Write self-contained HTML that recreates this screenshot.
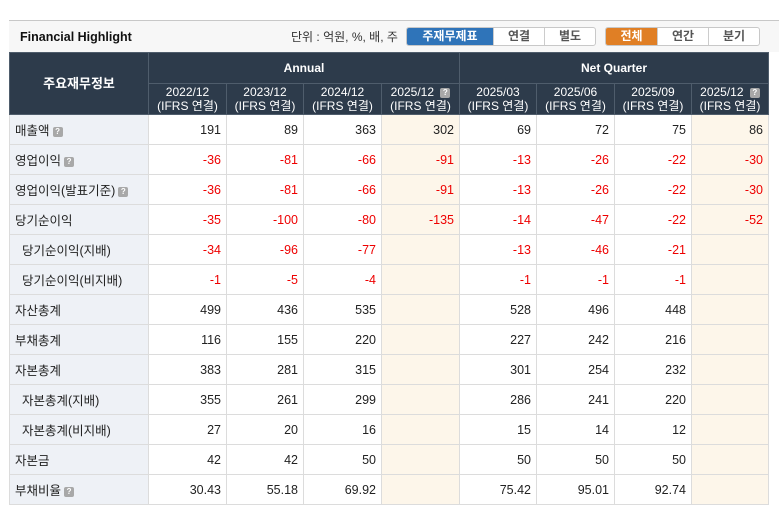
<!DOCTYPE html>
<html><head><meta charset="utf-8"><style>
*{margin:0;padding:0;box-sizing:border-box}
body{width:782px;height:492px;overflow:hidden;background:#fff;font-family:"Liberation Sans","Noto Sans CJK KR",sans-serif;font-size:12px;color:#222;position:relative}
.bar{position:absolute;left:9px;top:20px;width:770px;height:32px;background:#f7f7f7;border-top:1px solid #c8c8c8}
.title{position:absolute;left:11px;top:9px;font-weight:bold;font-size:12.5px;color:#111}
.unit{position:absolute;left:282px;top:7px;font-size:12px;color:#333}
.btns{position:absolute;top:6px;height:19px;display:flex;border:1px solid #c8c8c8;border-radius:3px;overflow:hidden;background:#fff}
.btns div{height:17px;line-height:17px;text-align:center;font-size:12px;color:#555;font-weight:bold;border-left:1px solid #ccc}
.btns div:first-child{border-left:none}
.blue{background:#2f74b9;color:#fff!important}
.orange{background:#e07f25;color:#fff!important}
table{position:absolute;left:9px;top:52px;border-collapse:collapse;table-layout:fixed}
th{background:#2d3b4b;color:#fff;font-size:12px;font-weight:bold;border:1px solid #4f5d6c;line-height:14px;padding:0}
th.y{font-weight:normal}
td{height:30px;border:1px solid #dcdcdc;text-align:right;padding-right:5px;font-size:12.5px}
td.l{text-align:left;background:#eef1f6;padding-left:5px}
td.i{padding-left:12px}
td.f{background:#fdf6ea}
.n{color:#e00}
.q{display:inline-block;width:10px;height:10px;background:#a8a8a8;border-radius:2px;vertical-align:middle;margin-left:3px;color:#fff;font-size:8px;line-height:10px;text-align:center;font-weight:bold}
</style></head><body>
<div class="bar">
<div class="title">Financial Highlight</div>
<div class="unit">단위 : 억원, %, 배, 주</div>
<div class="btns" style="left:397px"><div class="blue" style="width:86px">주재무제표</div><div style="width:51px">연결</div><div style="width:51px">별도</div></div>
<div class="btns" style="left:596px"><div class="orange" style="width:51px">전체</div><div style="width:51px">연간</div><div style="width:51px">분기</div></div>
</div>
<table>
<colgroup><col style="width:139px"><col style="width:78px"><col style="width:77px"><col style="width:78px"><col style="width:78px"><col style="width:77px"><col style="width:78px"><col style="width:77px"><col style="width:77px"></colgroup>
<tr style="height:31px"><th rowspan="2" style="font-size:13px">주요재무정보</th><th colspan="4">Annual</th><th colspan="4">Net Quarter</th></tr>
<tr style="height:31px"><th class="y">2022/12<br>(IFRS 연결)</th><th class="y">2023/12<br>(IFRS 연결)</th><th class="y">2024/12<br>(IFRS 연결)</th><th class="y">2025/12 <span class="q">?</span><br>(IFRS 연결)</th><th class="y">2025/03<br>(IFRS 연결)</th><th class="y">2025/06<br>(IFRS 연결)</th><th class="y">2025/09<br>(IFRS 연결)</th><th class="y">2025/12 <span class="q">?</span><br>(IFRS 연결)</th></tr>
<tr><td class="l">매출액<span class="q">?</span></td><td>191</td><td>89</td><td>363</td><td class="f">302</td><td>69</td><td>72</td><td>75</td><td class="f">86</td></tr>
<tr><td class="l">영업이익<span class="q">?</span></td><td class="n">-36</td><td class="n">-81</td><td class="n">-66</td><td class="f n">-91</td><td class="n">-13</td><td class="n">-26</td><td class="n">-22</td><td class="f n">-30</td></tr>
<tr><td class="l">영업이익(발표기준)<span class="q">?</span></td><td class="n">-36</td><td class="n">-81</td><td class="n">-66</td><td class="f n">-91</td><td class="n">-13</td><td class="n">-26</td><td class="n">-22</td><td class="f n">-30</td></tr>
<tr><td class="l">당기순이익</td><td class="n">-35</td><td class="n">-100</td><td class="n">-80</td><td class="f n">-135</td><td class="n">-14</td><td class="n">-47</td><td class="n">-22</td><td class="f n">-52</td></tr>
<tr><td class="l i">당기순이익(지배)</td><td class="n">-34</td><td class="n">-96</td><td class="n">-77</td><td class="f"></td><td class="n">-13</td><td class="n">-46</td><td class="n">-21</td><td class="f"></td></tr>
<tr><td class="l i">당기순이익(비지배)</td><td class="n">-1</td><td class="n">-5</td><td class="n">-4</td><td class="f"></td><td class="n">-1</td><td class="n">-1</td><td class="n">-1</td><td class="f"></td></tr>
<tr><td class="l">자산총계</td><td>499</td><td>436</td><td>535</td><td class="f"></td><td>528</td><td>496</td><td>448</td><td class="f"></td></tr>
<tr><td class="l">부채총계</td><td>116</td><td>155</td><td>220</td><td class="f"></td><td>227</td><td>242</td><td>216</td><td class="f"></td></tr>
<tr><td class="l">자본총계</td><td>383</td><td>281</td><td>315</td><td class="f"></td><td>301</td><td>254</td><td>232</td><td class="f"></td></tr>
<tr><td class="l i">자본총계(지배)</td><td>355</td><td>261</td><td>299</td><td class="f"></td><td>286</td><td>241</td><td>220</td><td class="f"></td></tr>
<tr><td class="l i">자본총계(비지배)</td><td>27</td><td>20</td><td>16</td><td class="f"></td><td>15</td><td>14</td><td>12</td><td class="f"></td></tr>
<tr><td class="l">자본금</td><td>42</td><td>42</td><td>50</td><td class="f"></td><td>50</td><td>50</td><td>50</td><td class="f"></td></tr>
<tr><td class="l">부채비율<span class="q">?</span></td><td>30.43</td><td>55.18</td><td>69.92</td><td class="f"></td><td>75.42</td><td>95.01</td><td>92.74</td><td class="f"></td></tr>
</table>
</body></html>
